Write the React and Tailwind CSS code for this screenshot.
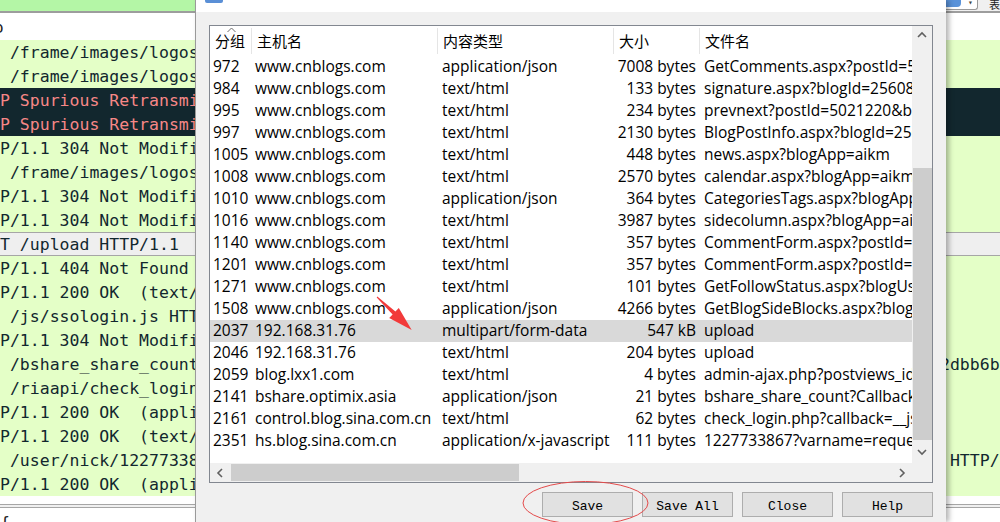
import React from 'react';

const wsRows = [
    { t: ' /frame/images/logos/cnblogs.png', k: 'g' },
    { t: ' /frame/images/logos/cnblogs.png', k: 'g' },
    { t: 'P Spurious Retransmission] 443', k: 'd' },
    { t: 'P Spurious Retransmission] 443', k: 'd' },
    { t: 'P/1.1 304 Not Modified', k: 'g' },
    { t: ' /frame/images/logos/cnblogs.png', k: 'g' },
    { t: 'P/1.1 304 Not Modified', k: 'g' },
    { t: 'P/1.1 304 Not Modified', k: 'g' },
    { t: 'T /upload HTTP/1.1', k: 's' },
    { t: 'P/1.1 404 Not Found', k: 'g' },
    { t: 'P/1.1 200 OK  (text/html)', k: 'g' },
    { t: ' /js/ssologin.js HTTP/1.1', k: 'g' },
    { t: 'P/1.1 304 Not Modified', k: 'g' },
    { t: ' /bshare_share_count?Callback', k: 'g', r: '2dbb6b' },
    { t: ' /riaapi/check_login.php', k: 'g' },
    { t: 'P/1.1 200 OK  (application/json)', k: 'g' },
    { t: 'P/1.1 200 OK  (text/html)', k: 'g' },
    { t: ' /user/nick/1227733867', k: 'g', r: ' HTTP/' },
    { t: 'P/1.1 200 OK  (application/json)', k: 'g' },
];

const rowStyle = {
    g: 'bg-[#e4ffc7] text-[#12272e] leading-[25px]',
    d: 'bg-[#12272e] text-[#f78787] leading-[25px]',
    s: 'bg-[#efefef] text-[#12272e] border-y border-[#a6a6a6] leading-[23px]',
};

const files = [
    ['972', 'www.cnblogs.com', 'application/json', '7008 bytes', 'GetComments.aspx?postId=5021220&blogApp=aikm'],
    ['984', 'www.cnblogs.com', 'text/html', '133 bytes', 'signature.aspx?blogId=256087'],
    ['995', 'www.cnblogs.com', 'text/html', '234 bytes', 'prevnext?postId=5021220&blogId=256087'],
    ['997', 'www.cnblogs.com', 'text/html', '2130 bytes', 'BlogPostInfo.aspx?blogId=256087&postId=5021220'],
    ['1005', 'www.cnblogs.com', 'text/html', '448 bytes', 'news.aspx?blogApp=aikm'],
    ['1008', 'www.cnblogs.com', 'text/html', '2570 bytes', 'calendar.aspx?blogApp=aikm&dateStr='],
    ['1010', 'www.cnblogs.com', 'application/json', '364 bytes', 'CategoriesTags.aspx?blogApp=aikm'],
    ['1016', 'www.cnblogs.com', 'text/html', '3987 bytes', 'sidecolumn.aspx?blogApp=aikm'],
    ['1140', 'www.cnblogs.com', 'text/html', '357 bytes', 'CommentForm.aspx?postId=5021220'],
    ['1201', 'www.cnblogs.com', 'text/html', '357 bytes', 'CommentForm.aspx?postId=5021220'],
    ['1271', 'www.cnblogs.com', 'text/html', '101 bytes', 'GetFollowStatus.aspx?blogUserGuid='],
    ['1508', 'www.cnblogs.com', 'application/json', '4266 bytes', 'GetBlogSideBlocks.aspx?blogApp=aikm'],
    ['2037', '192.168.31.76', 'multipart/form-data', '547 kB', 'upload'],
    ['2046', '192.168.31.76', 'text/html', '204 bytes', 'upload'],
    ['2059', 'blog.lxx1.com', 'text/html', '4 bytes', 'admin-ajax.php?postviews_id=1234'],
    ['2141', 'bshare.optimix.asia', 'application/json', '21 bytes', 'bshare_share_count?Callback=jQuery'],
    ['2161', 'control.blog.sina.com.cn', 'text/html', '62 bytes', 'check_login.php?callback=__jsonp'],
    ['2351', 'hs.blog.sina.com.cn', 'application/x-javascript', '111 bytes', '1227733867?varname=requestId_'],
];

function Chevron({ dir }) {
    // small scrollbar arrow glyph
    const pts = {
        up: '1,6 5,2 9,6',
        down: '1,2 5,6 9,2',
        left: '6,1 2,5 6,9',
        right: '3,1 7,5 3,9',
    }[dir];
    return (
        <svg width="10" height="10" viewBox="0 0 10 10">
            <polyline points={pts} fill="none" stroke="#606060" strokeWidth="1.6" />
        </svg>
    );
}

function Wireshark() {
    return (
        <div className="flex flex-col w-[1000px] h-[522px] font-['DejaVu_Sans_Mono',monospace] text-[16.5px]">
            {/* display filter bar */}
            <div className="flex h-[11px]">
                <div className="w-[945px] bg-[#b4f6a6]" />
                <div className="flex-1 flex bg-[#f0f0f0]">
                    <div className="w-[33px] h-[10px] flex items-start bg-white border-r border-b border-[#9a9a9a] rounded-br-[3px]">
                        <div className="w-[16px] h-[7px] bg-[#5b93d9] rounded-br-sm" />
                        <span className="ml-[7px] text-[8px] leading-[6px] text-[#444]">▾</span>
                    </div>
                    <span className="ml-[11px] text-[11px] leading-[9px] text-[#222] font-['Noto_Sans_CJK_SC',sans-serif]">表</span>
                </div>
            </div>
            <div className="h-[2px] bg-[#9d9d9d]" />
            <div className="h-[27px] bg-white text-[16px] leading-[30px] text-[#222] -indent-[6px]">o</div>
            {wsRows.map((r, i) => (
                <div key={i} className={`flex h-[24px] whitespace-pre ${rowStyle[r.k]}`}>
                    <span className="w-[940px] shrink-0 overflow-hidden">{r.t}</span>
                    <span>{r.r || ''}</span>
                </div>
            ))}
            <div className="h-[8px] bg-white" />
            <div className="h-[4px] bg-[#f0f0f0] border-y border-[#a6a6a6]" />
            <div className="flex-1 bg-white text-[#222] leading-[22px] whitespace-pre overflow-hidden pt-[4px]">{'{    .'}</div>
        </div>
    );
}

function ExportDialog() {
    return (
        <div className="absolute top-0 left-[195px] w-[751px] h-[522px] bg-[#f0f0f0] border-l border-[#9a9a9a] shadow-[3px_0_5px_rgba(0,0,0,0.3)] flex flex-col">
            {/* title bar remnant */}
            <div className="h-[12px] bg-white pl-[9px]">
                <div className="w-[18px] h-[3px] bg-[#5a8fd6] rounded-b-[2px]" />
            </div>

            {/* list view */}
            <div className="mt-[13px] ml-[13px] w-[724px] h-[458px] border border-[#828790] bg-white grid grid-cols-[702px_20px] grid-rows-[437px_19px]">
                <div className="overflow-hidden flex flex-col">
                    <div className="h-[30px] flex items-center font-['Noto_Sans_CJK_SC',sans-serif] text-[15px] text-black">
                        <div className="relative w-[42px] h-[26px] flex items-center pl-[5px] border-r border-[#e5e5e5]">
                            分组
                            <svg className="absolute -top-[1px] left-[17px]" width="9" height="6" viewBox="0 0 9 6">
                                <polyline points="0.5,5 4.5,1 8.5,5" fill="none" stroke="#6d6d6d" strokeWidth="1" />
                            </svg>
                        </div>
                        <div className="w-[186px] h-[26px] flex items-center pl-[5px] border-r border-[#e5e5e5]">主机名</div>
                        <div className="w-[176px] h-[26px] flex items-center pl-[5px] border-r border-[#e5e5e5]">内容类型</div>
                        <div className="w-[86px] h-[26px] flex items-center pl-[5px] border-r border-[#e5e5e5]">大小</div>
                        <div className="flex-1 h-[26px] flex items-center pl-[5px]">文件名</div>
                    </div>
                    {files.map(f => (
                        <div
                            key={f[0]}
                            className={`h-[22px] flex items-center whitespace-nowrap font-['Open_Sans','Noto_Sans_CJK_SC',sans-serif] text-[15.5px] text-black ${f[0] === '2037' ? 'bg-[#d9d9d9]' : ''}`}
                        >
                            <div className="w-[42px] shrink-0 pl-[3px] overflow-hidden">{f[0]}</div>
                            <div className="w-[186px] shrink-0 pl-[3px] overflow-hidden">{f[1]}</div>
                            <div className="w-[176px] shrink-0 pl-[4px] overflow-hidden">{f[2]}</div>
                            <div className="w-[86px] shrink-0 pr-[4px] text-right overflow-hidden">{f[3]}</div>
                            <div className="pl-[4px]">{f[4]}</div>
                        </div>
                    ))}
                </div>

                {/* vertical scrollbar */}
                <div className="bg-[#f0f0f0] flex flex-col">
                    <div className="h-[20px] flex items-center justify-center"><Chevron dir="up" /></div>
                    <div className="h-[122px]" />
                    <div className="h-[272px] ml-px bg-[#cdcdcd]" />
                    <div className="flex-1" />
                    <div className="h-[20px] flex items-center justify-center"><Chevron dir="down" /></div>
                </div>

                {/* horizontal scrollbar */}
                <div className="bg-[#f0f0f0] flex items-stretch">
                    <div className="w-[21px] flex items-center justify-center"><Chevron dir="left" /></div>
                    <div className="w-[288px] my-px bg-[#cdcdcd]" />
                    <div className="flex-1" />
                    <div className="w-[20px] flex items-center justify-center"><Chevron dir="right" /></div>
                </div>
                <div className="bg-[#f0f0f0]" />
            </div>

            {/* buttons */}
            <div className="mt-[9px] w-[737px] flex justify-end gap-[9px] font-['Liberation_Mono',monospace] text-[13px] text-black">
                {['Save', 'Save All', 'Close', 'Help'].map(b => (
                    <button key={b} className="w-[91px] h-[25px] pt-[3px] bg-[#e1e1e1] border border-[#adadad] leading-none">
                        {b}
                    </button>
                ))}
            </div>
        </div>
    );
}

export default function App() {
    return (
        <div className="relative w-[1000px] h-[522px] overflow-hidden bg-white">
            <Wireshark />
            <ExportDialog />

            {/* annotations */}
            <svg className="absolute left-[370px] top-[290px]" width="50" height="50" viewBox="0 0 50 50">
                <polygon
                    points="7.3,6.6 25.4,21.5 28.8,17.9 41.7,40 19.2,28.1 22.6,24.5 6.7,7.4"
                    fill="#f23a3a"
                />
            </svg>
            <svg className="absolute left-[520px] top-[478px]" width="135" height="50" viewBox="0 0 135 50">
                <ellipse cx="65.5" cy="25" rx="62.5" ry="21.5" fill="none" stroke="#e44a4a" strokeWidth="1" />
            </svg>
        </div>
    );
}
